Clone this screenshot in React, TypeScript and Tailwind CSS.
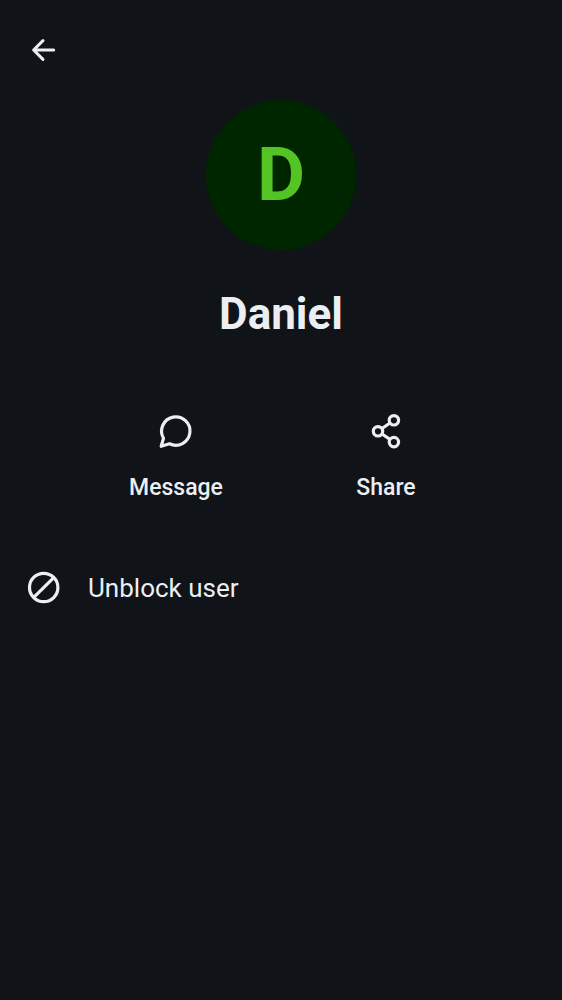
export default function App() {
  return (
    <div className="min-h-screen bg-[#101317] font-['Roboto',sans-serif] text-[#ebeef2]">
      <header className="flex px-5 pt-[26px]">
        <button type="button" aria-label="Back" className="flex size-12 items-center justify-center">
          <svg viewBox="0 0 48 48" className="size-12" fill="none" stroke="currentColor" strokeWidth="3" strokeLinecap="round" strokeLinejoin="round">
            <path d="M33.700 24H14M23 14.600L13.600 24l9.400 9.400" />
          </svg>
        </button>
      </header>
      <main>
        <section className="flex flex-col items-center pt-[26px]">
          <div className="flex size-[150px] items-center justify-center rounded-full bg-[#002600] text-[74px] leading-none font-bold text-[#54c424]">D</div>
          <h1 className="mt-9 text-[44px] leading-[56px] font-bold">Daniel</h1>
        </section>
        <div className="mt-16 flex justify-center">
          <button type="button" className="flex w-[210px] flex-col items-center gap-[18px]">
            <svg viewBox="0 0 50 50" className="size-[50px]" fill="none" stroke="currentColor" strokeWidth="3.2" strokeLinejoin="round">
              <path d="M10.200 40.300L12.500 32.200A14.200 14.200 0 1 1 18.500 37.800Z" />
            </svg>
            <span className="text-[23px] leading-7 font-medium">Message</span>
          </button>
          <button type="button" className="flex w-[210px] flex-col items-center gap-[18px]">
            <svg viewBox="0 0 50 50" className="size-[50px]" fill="none" stroke="currentColor" strokeWidth="3.2">
              <circle cx="32.900" cy="14.300" r="4.700" />
              <circle cx="17" cy="25.300" r="4.700" />
              <circle cx="32.900" cy="36.100" r="4.700" />
              <path d="M21 22.500L29 17M21 28L29 33.400" />
            </svg>
            <span className="text-[23px] leading-7 font-medium">Share</span>
          </button>
        </div>
        <button type="button" className="mt-[50px] flex w-full items-center gap-5 px-5 py-3 text-left">
          <svg viewBox="0 0 48 48" className="size-12" fill="none" stroke="currentColor" strokeWidth="3.2">
            <circle cx="23.700" cy="23.500" r="14.200" />
            <path d="M13.500 33.700L34 13.300" />
          </svg>
          <span className="text-[26px] leading-8">Unblock user</span>
        </button>
      </main>
    </div>
  );
}
